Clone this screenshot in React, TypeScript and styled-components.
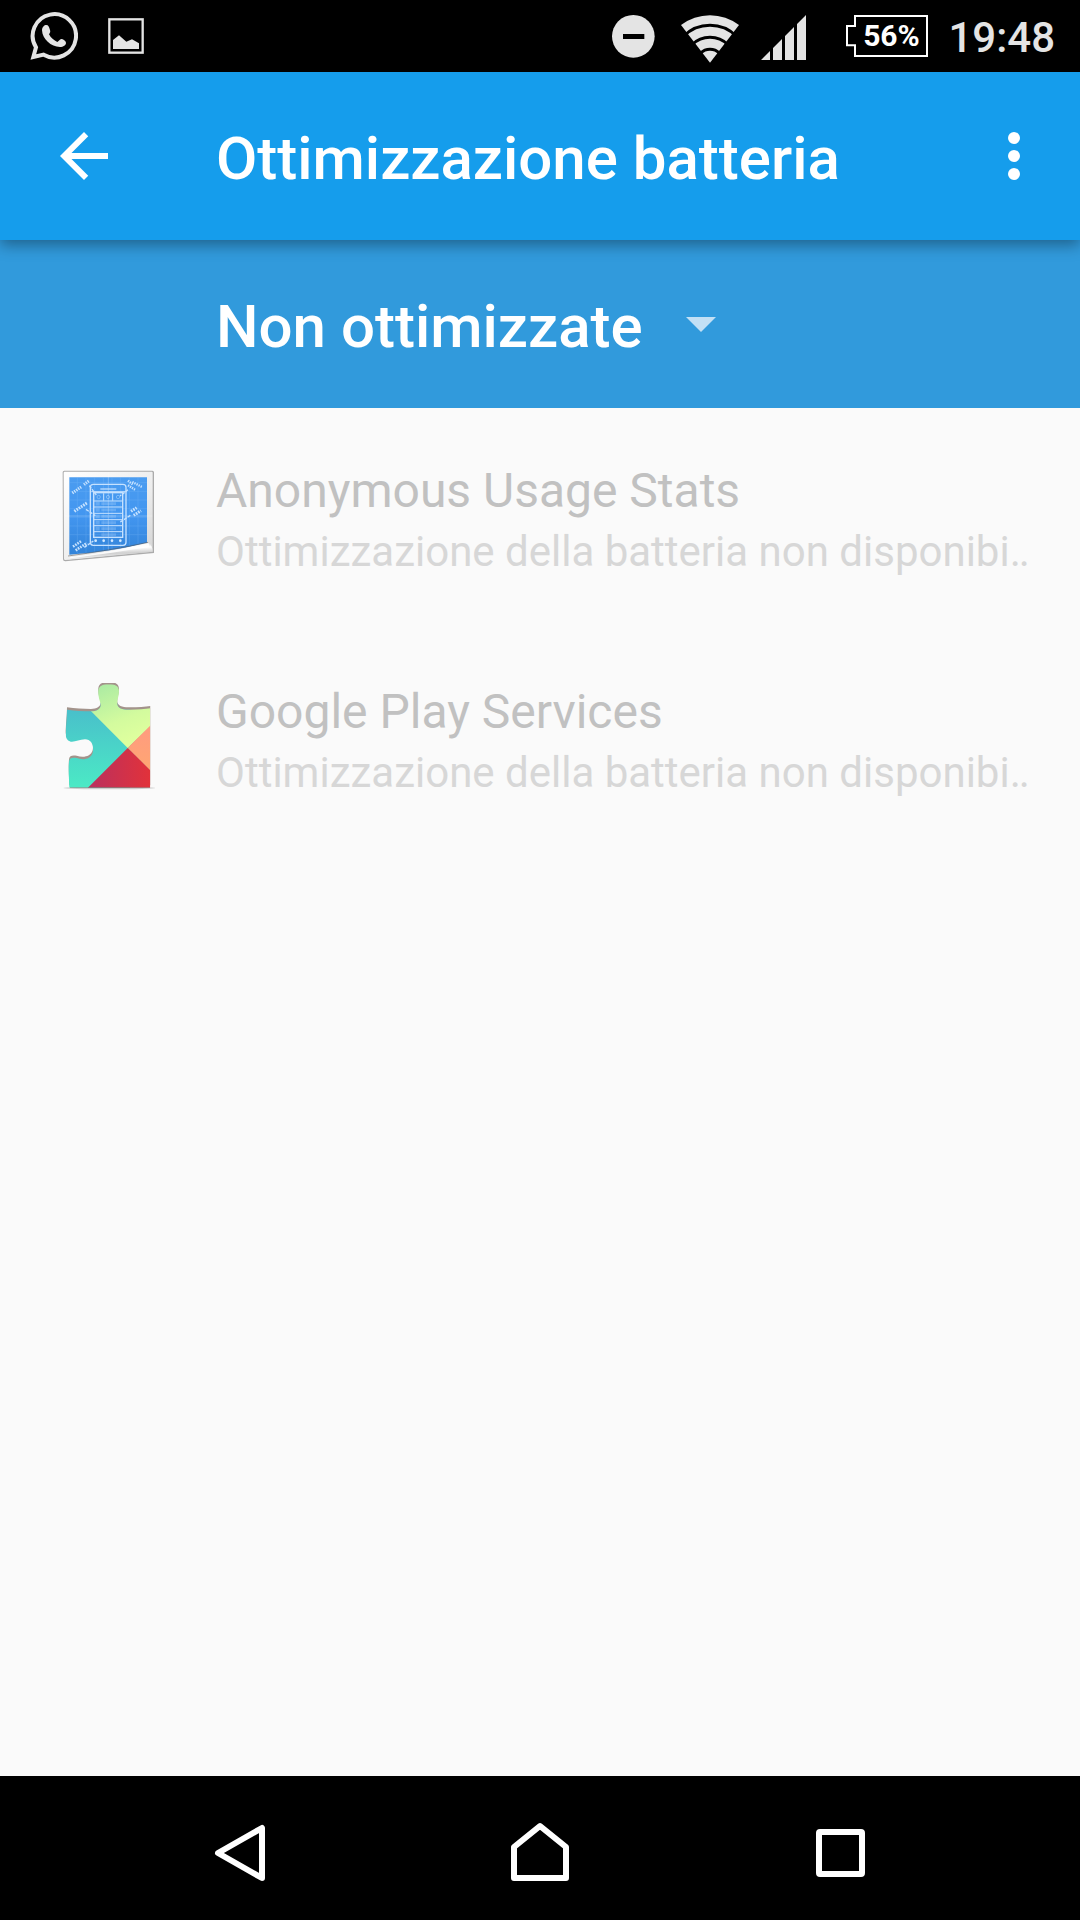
import React from 'react';
import styled, { createGlobalStyle } from 'styled-components';

const GlobalStyle = createGlobalStyle`
  * { box-sizing: border-box; }
  body {
    margin: 0;
    background: #fafafa;
    font-family: Roboto, "Noto Sans", sans-serif;
  }
`;

const Screen = styled.div`
  display: flex;
  flex-direction: column;
  min-height: 100vh;
`;

const StatusBar = styled.div`
  display: flex;
  align-items: center;
  justify-content: space-between;
  height: 72px;
  padding: 0 25px 0 30px;
  background: #000;
  color: #e4e4e4;
`;

const StatusGroup = styled.div<{ $gap: number }>`
  display: flex;
  align-items: center;
  gap: ${(p) => p.$gap}px;
  svg { display: block; }
`;

const Battery = styled.div`
  display: grid;
  align-items: center;
  > * { grid-area: 1 / 1; }
`;

const BatteryText = styled.span`
  padding-left: 8px;
  color: #fff;
  font-size: 30px;
  font-weight: 700;
  line-height: 36px;
  text-align: center;
`;

const Clock = styled.time`
  padding-top: 4px;
  font-size: 42px;
  font-weight: 500;
  line-height: 48px;
`;

const AppBar = styled.header`
  z-index: 1;
  display: flex;
  align-items: center;
  gap: 96px;
  height: 168px;
  padding: 0 30px 0 48px;
  background: #159dec;
  box-shadow: 0 5px 14px rgba(0, 0, 0, 0.36);
`;

const Title = styled.h1`
  flex: 1;
  margin: 0;
  padding-top: 6px;
  color: #fff;
  font-size: 60px;
  font-weight: 500;
  line-height: 72px;
`;

const IconButton = styled.button`
  display: grid;
  place-items: center;
  padding: 0;
  border: 0;
  background: none;
  color: #fff;
`;

const FilterBar = styled.div`
  display: flex;
  align-items: center;
  gap: 43px;
  height: 168px;
  padding: 0 48px 0 216px;
  background: #319adc;
`;

const Filter = styled.select`
  appearance: none;
  margin: 0;
  padding: 6px 0 0;
  border: 0;
  background: none;
  color: #fff;
  font-family: inherit;
  font-size: 60px;
  font-weight: 500;
  line-height: 72px;
`;

const AppList = styled.ul`
  flex: 1;
  margin: 0;
  padding: 0;
  list-style: none;
`;

const AppRow = styled.li`
  display: flex;
  align-items: flex-start;
  gap: 54px;
  padding: 54px 48px 53px 54px;
`;

const AppText = styled.div`
  display: flex;
  flex-direction: column;
  gap: 7px;
  min-width: 0;
`;

const AppName = styled.span`
  color: #c1c1c1;
  font-size: 48px;
  line-height: 58px;
`;

const AppSummary = styled.span`
  overflow: hidden;
  color: #d7d7d7;
  font-size: 42px;
  line-height: 49px;
  white-space: nowrap;
`;

const NavBar = styled.nav`
  display: flex;
  justify-content: center;
  height: 144px;
  padding: 0 90px;
  background: #000;
`;

const NavButton = styled(IconButton)`
  flex: 1;
  padding-top: 8px;
`;

const WhatsAppIcon = () => (
  <svg width="48" height="48" viewBox="90 36 144 144" aria-hidden="true">
    <path d="M100 171L108 142A65 65 0 1 1 131 164Z" fill="none" stroke="currentColor" strokeWidth="12" />
    <path
      d="M139 75C133 75 126 81 126 91C127 117 153 141 180 141C190 141 198 136 198 129C198 123 193 120 186 117C181 116 178 121 172 126C162 122 152 113 147 103C150 98 152 95 150 90C147 80 145 75 139 75Z"
      fill="currentColor"
    />
  </svg>
);

const PictureIcon = () => (
  <svg width="36" height="36" viewBox="324 54 108 108" aria-hidden="true">
    <rect x="328" y="58" width="100" height="100" fill="none" stroke="currentColor" strokeWidth="7" />
    <path d="M339 120L357 106L379 125L396 118L417 130V147H339Z" fill="currentColor" />
  </svg>
);

const DoNotDisturbIcon = () => (
  <svg width="48" height="48" viewBox="66 36 144 144" aria-hidden="true">
    <circle cx="130" cy="109" r="64" fill="currentColor" />
    <rect x="99" y="102" width="64" height="15" fill="#000" />
  </svg>
);

const WifiIcon = () => (
  <svg width="60" height="54" viewBox="270 27 180 162" aria-hidden="true">
    <path d="M360 188L273 75A143 143 0 0 1 447 75Z" fill="currentColor" />
    <g fill="none" stroke="#000" strokeWidth="9">
      <circle cx="360" cy="188" r="112" />
      <circle cx="360" cy="188" r="76" />
      <circle cx="360" cy="188" r="40" />
    </g>
  </svg>
);

const SignalIcon = () => (
  <svg width="66" height="48" viewBox="510 36 198 144" aria-hidden="true">
    <path
      d="M513 180L540 153V180ZM549 180V144L576 117V180ZM585 180V108L612 81V180ZM621 180V72L648 45V180Z"
      fill="currentColor"
    />
  </svg>
);

const BatteryIcon = () => (
  <svg width="82" height="42" viewBox="768 45 246 126" aria-hidden="true">
    <path d="M795 48H1011V168H795V136H771V78H795Z" fill="none" stroke="#fff" strokeWidth="6" />
  </svg>
);

const ArrowBackIcon = () => (
  <svg width="72" height="72" viewBox="0 0 24 24" aria-hidden="true">
    <path d="M20 11H7.83l5.59-5.59L12 4l-8 8 8 8 1.41-1.41L7.83 13H20v-2z" fill="currentColor" />
  </svg>
);

const MoreIcon = () => (
  <svg width="72" height="72" viewBox="0 0 24 24" aria-hidden="true">
    <g fill="currentColor">
      <circle cx="12" cy="6" r="2" />
      <circle cx="12" cy="12" r="2" />
      <circle cx="12" cy="18" r="2" />
    </g>
  </svg>
);

const Caret = () => (
  <svg width="30" height="15" viewBox="0 0 30 15" aria-hidden="true">
    <path d="M0 0H30L15 15Z" fill="#c2e0f5" />
  </svg>
);

const BlueprintIcon = () => (
  <svg width="108" height="108" viewBox="42 36 324 324" aria-hidden="true">
    <defs>
      <linearGradient id="sheet" x1="0" y1="0" x2="1" y2="1">
        <stop offset="0" stopColor="#ffffff" />
        <stop offset="0.6" stopColor="#ececec" />
        <stop offset="1" stopColor="#d2d2d2" />
      </linearGradient>
      <linearGradient id="ink" x1="0" y1="0" x2="0" y2="1">
        <stop offset="0" stopColor="#4b9cf0" />
        <stop offset="0.5" stopColor="#4296f0" />
        <stop offset="1" stopColor="#3283d8" />
      </linearGradient>
      <linearGradient id="curl" x1="0" y1="0" x2="0.15" y2="1">
        <stop offset="0" stopColor="#b5b5b5" />
        <stop offset="0.4" stopColor="#ffffff" />
        <stop offset="0.7" stopColor="#d0d0d0" />
        <stop offset="1" stopColor="#f4f4f4" />
      </linearGradient>
    </defs>
    <path d="M68 67Q68 62 73 62H337Q342 62 342 67V309L76 334Q69 334 69 328Z" fill="#777" opacity="0.6" />
    <path d="M71 68Q71 65 74 65H335Q338 65 338 68V305L76 330Q72 330 72 326Z" fill="url(#sheet)" />
    <path d="M88 82H321V279C240 298 170 308 88 314Z" fill="url(#ink)" />
    <g stroke="#8cc4ff" strokeWidth="2" opacity="0.3">
      <path d="M112 82V310M138 82V308M164 82V305M190 82V302M216 82V300M242 82V296M268 82V290M294 82V284" />
      <path d="M88 98H321M88 124H321M88 150H321M88 176H321M88 202H321M88 228H321M88 254H321" />
    </g>
    <path d="M74 198H337M205 66V300" stroke="#fff" strokeWidth="3" opacity="0.25" />
    <g fill="none" stroke="#c6e2ff">
      <rect x="151" y="103" width="107" height="183" rx="9" strokeWidth="4" />
      <rect x="161" y="128" width="87" height="134" strokeWidth="4" />
      <path d="M154 125H255M191 130V152M218 130V152M162 153H247M162 171H247M162 190H247M162 209H247M162 227H247M162 245H247" strokeWidth="3" />
      <path d="M181 117H229" strokeWidth="6" opacity="0.6" />
      <path d="M184 161H228M184 180H228M184 199H228M184 218H228M184 236H228M184 254H228" strokeWidth="8" opacity="0.25" />
      <path d="M167 161H179M167 180H179M167 199H179M167 218H179M167 236H179" strokeWidth="11" opacity="0.25" />
      <circle cx="176" cy="141" r="5" strokeWidth="2" opacity="0.6" />
      <circle cx="204" cy="141" r="5" strokeWidth="2" opacity="0.6" />
      <circle cx="234" cy="141" r="5" strokeWidth="2" opacity="0.6" />
      <path d="M148 107L169 135M264 119L240 138M138 178L166 197M271 196L241 216M133 292L160 273" strokeWidth="4" strokeDasharray="10 3" />
      <path d="M97 129L125 110M132 104L149 91" strokeWidth="9" strokeDasharray="4 3" />
      <path d="M264 92L280 105M277 96L306 111M264 106L285 119" strokeWidth="7" strokeDasharray="4 3" />
      <path d="M103 184L142 158" strokeWidth="9" strokeDasharray="5 3" />
      <path d="M273 184L290 173M281 196L303 182" strokeWidth="9" strokeDasharray="5 3" />
      <path d="M99 290L124 273M107 301L141 279" strokeWidth="8" strokeDasharray="5 3" />
    </g>
    <g fill="#d4eaff">
      <circle cx="167" cy="272" r="4" />
      <circle cx="191" cy="272" r="4" />
      <circle cx="216" cy="272" r="4" />
      <circle cx="241" cy="272" r="4" />
    </g>
    <path d="M74 329C160 316 250 298 326 277C333 283 338 294 338 305Z" fill="url(#curl)" />
    <path d="M90 322C170 311 250 297 325 279C329 283 329 289 325 292C240 305 170 315 90 325Z" fill="#fff" opacity="0.85" />
    <path d="M84 318C160 308 250 293 324 277" fill="none" stroke="#555" strokeWidth="3" opacity="0.55" />
  </svg>
);

const PUZZLE =
  'M81 119C105 122 130 124 153 124C171 124 184 116 182 102C178 88 174 78 175 62C176 48 188 43 205 43C226 43 236 48 237 63C237 80 230 90 232 104C235 118 255 119 270 119C295 119 315 117 331 115V353H88C87 325 85 300 87 275C88 263 98 262 110 264C128 271 152 268 158 248C162 226 155 209 135 208C118 208 105 217 92 215C80 212 77 202 77 190C78 165 81 142 81 119Z';

const PuzzleIcon = () => (
  <svg width="108" height="108" viewBox="42 39 324 324" aria-hidden="true">
    <defs>
      <clipPath id="piece">
        <path d={PUZZLE} />
      </clipPath>
      <clipPath id="edge">
        <rect x="70" y="30" width="262" height="322" />
      </clipPath>
      <linearGradient id="teal" x1="0" y1="0" x2="0" y2="1">
        <stop offset="0" stopColor="#49bccb" />
        <stop offset="1" stopColor="#4beac5" />
      </linearGradient>
      <linearGradient id="lime" x1="0" y1="0" x2="0.4" y2="1">
        <stop offset="0" stopColor="#a0e6a4" />
        <stop offset="0.7" stopColor="#d3fb9e" />
        <stop offset="1" stopColor="#deff9e" />
      </linearGradient>
      <linearGradient id="red" x1="0" y1="0" x2="1" y2="0">
        <stop offset="0" stopColor="#b9305f" />
        <stop offset="1" stopColor="#e2323a" />
      </linearGradient>
      <linearGradient id="orange" x1="0" y1="0" x2="0" y2="1">
        <stop offset="0" stopColor="#ff9b80" />
        <stop offset="1" stopColor="#ffa672" />
      </linearGradient>
    </defs>
    <ellipse cx="208" cy="354" rx="138" ry="4" fill="#000" opacity="0.18" />
    <g clipPath="url(#edge)">
      <path d={PUZZLE} transform="translate(0 -7)" fill="#a3938b" />
    </g>
    <g clipPath="url(#piece)">
      <rect x="70" y="100" width="200" height="254" fill="url(#teal)" />
      <path d="M128 98L140 30H332V168L263 234Z" fill="url(#lime)" />
      <path d="M263 234L332 166V302Z" fill="url(#orange)" />
      <path d="M263 234L332 302V354H143Z" fill="url(#red)" />
    </g>
    <path d="M90 353H330" stroke="#5a4a48" strokeWidth="2" opacity="0.5" />
  </svg>
);

const summary = 'Ottimizzazione della batteria non disponibi‥';

const apps = [
  { name: 'Anonymous Usage Stats', Icon: BlueprintIcon },
  { name: 'Google Play Services', Icon: PuzzleIcon },
];

export default function App() {
  return (
    <Screen>
      <GlobalStyle />
      <StatusBar>
        <StatusGroup $gap={30}>
          <WhatsAppIcon />
          <PictureIcon />
        </StatusGroup>
        <StatusGroup $gap={20}>
          <DoNotDisturbIcon />
          <WifiIcon />
          <SignalIcon />
          <Battery>
            <BatteryIcon />
            <BatteryText>56%</BatteryText>
          </Battery>
          <Clock>19:48</Clock>
        </StatusGroup>
      </StatusBar>
      <AppBar>
        <IconButton type="button" aria-label="Indietro">
          <ArrowBackIcon />
        </IconButton>
        <Title>Ottimizzazione batteria</Title>
        <IconButton type="button" aria-label="Altre opzioni">
          <MoreIcon />
        </IconButton>
      </AppBar>
      <FilterBar>
        <Filter aria-label="Filtro app">
          <option>Non ottimizzate</option>
        </Filter>
        <Caret />
      </FilterBar>
      <AppList>
        {apps.map(({ name, Icon }) => (
          <AppRow key={name}>
            <Icon />
            <AppText>
              <AppName>{name}</AppName>
              <AppSummary>{summary}</AppSummary>
            </AppText>
          </AppRow>
        ))}
      </AppList>
      <NavBar>
        <NavButton type="button" aria-label="Indietro">
          <svg width="60" height="60" viewBox="0 0 60 60" aria-hidden="true">
            <path d="M52 6V56L8 31Z" fill="none" stroke="#fff" strokeWidth="6" strokeLinejoin="round" />
          </svg>
        </NavButton>
        <NavButton type="button" aria-label="Home">
          <svg width="60" height="60" viewBox="0 0 60 60" aria-hidden="true">
            <path d="M4 56V25L30 4L56 25V56Z" fill="none" stroke="#fff" strokeWidth="6" strokeLinejoin="round" />
          </svg>
        </NavButton>
        <NavButton type="button" aria-label="Recenti">
          <svg width="60" height="60" viewBox="0 0 60 60" aria-hidden="true">
            <rect x="9" y="10" width="43" height="42" rx="1" fill="none" stroke="#fff" strokeWidth="6" strokeLinejoin="round" />
          </svg>
        </NavButton>
      </NavBar>
    </Screen>
  );
}
